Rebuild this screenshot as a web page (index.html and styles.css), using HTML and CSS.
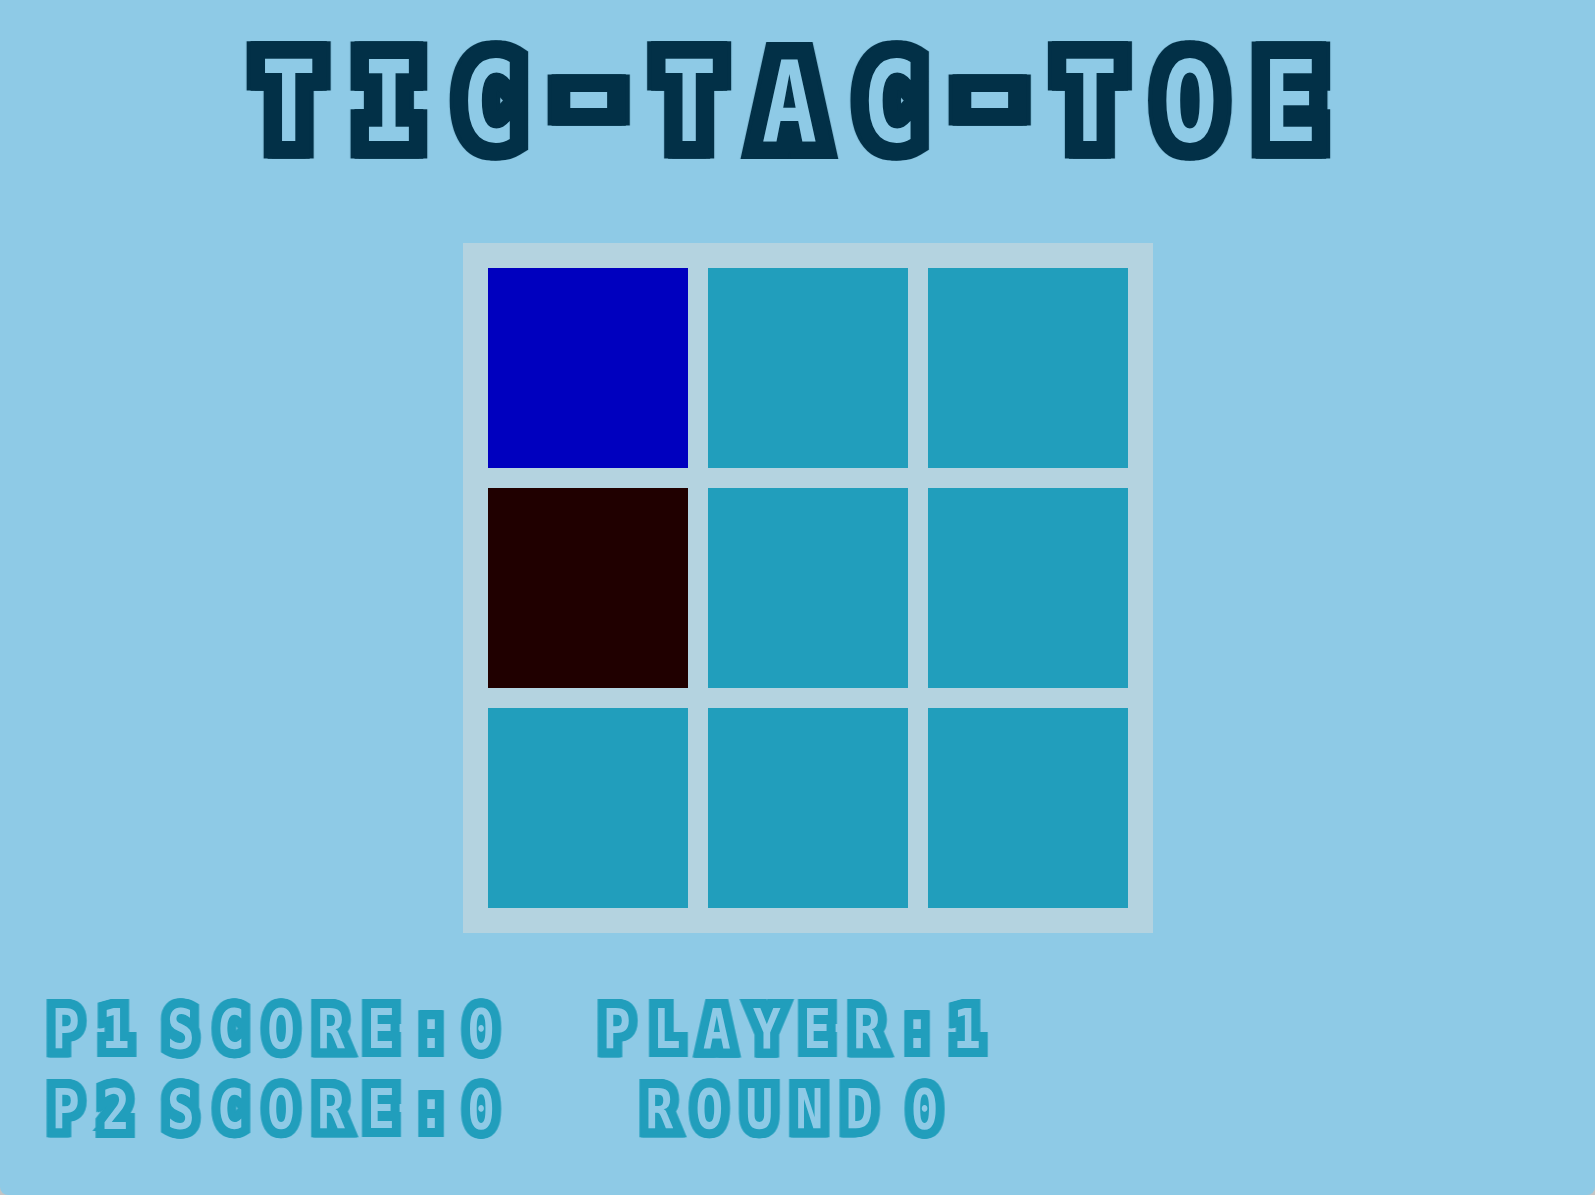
FILE: index.html
```html
<!DOCTYPE html>
<html lang="en">
<head>
<meta charset="utf-8">
<title>Tic-Tac-Toe</title>
<link rel="stylesheet" href="styles.css">
</head>
<body>
<main class="app">
  <h1 class="title">TI<span class="last">C</span><span class="dash">-</span>TA<span class="last">C</span><span class="dash">-</span>TOE</h1>
  <section class="board">
    <div class="cell cell-p1"></div>
    <div class="cell"></div>
    <div class="cell"></div>
    <div class="cell cell-p2"></div>
    <div class="cell"></div>
    <div class="cell"></div>
    <div class="cell"></div>
    <div class="cell"></div>
    <div class="cell"></div>
  </section>
  <footer class="footer">
    <div class="scores">
      <div class="line">P1 SCORE<span class="colon">:</span> 0</div>
      <div class="line">P2 SCORE<span class="colon">:</span> 0</div>
    </div>
    <div class="status">
      <div class="line">PLAYER<span class="colon">:</span> 1</div>
      <div class="line">ROUND 0</div>
    </div>
  </footer>
</main>
</body>
</html>
```
FILE: styles.css
```css
html { background: #c4c4c4; }
body { margin: 0; }
.app {
  width: 1595px;
  height: 1195px;
  box-sizing: border-box;
  overflow: hidden;
  background: #8ecae6;
  border-radius: 0 0 8px 8px;
  padding-top: 32px;
}
.title {
  margin: 0 0 0 261px;
  height: 211px;
  font: 700 112px/140px "DejaVu Sans Mono", monospace;
  letter-spacing: 54.7px;
  white-space: nowrap;
  color: #8ecae6;
  transform: scaleX(0.82);
  transform-origin: left top;
  -webkit-text-stroke: 35px #023047;
  paint-order: stroke fill;
  filter: drop-shadow(5px 0 0 #023047) drop-shadow(-5px 0 0 #023047) blur(0.5px);
}
.last { letter-spacing: 34.7px; }
.dash {
  display: inline-block;
  letter-spacing: 0;
  margin: 0 54.7px 0 20px;
  transform: translateY(-9px) scaleX(1.3);
  transform-origin: 50% 50%;
}
.board {
  margin-left: 463px;
  width: 690px;
  box-sizing: border-box;
  padding: 25px;
  display: grid;
  grid-template-columns: repeat(3, 200px);
  grid-auto-rows: 200px;
  gap: 20px;
  background: #b4d3e0;
}
.cell { background: #219ebc; }
.cell-p1 { background: #0000bf; }
.cell-p2 { background: #200000; }
.footer {
  margin-top: 56px;
  display: flex;
  font: 700 56px/80px "DejaVu Sans Mono", monospace;
  letter-spacing: 27.3px;
  word-spacing: -42.7px;
  white-space: nowrap;
  color: #8ecae6;
}
.scores { margin-left: 52px; width: 551px; transform: scaleX(0.82); transform-origin: left top; }
.status { width: 488px; text-align: center; transform: scaleX(0.82); transform-origin: left top; }
.line {
  -webkit-text-stroke: 18px #219ebc;
  paint-order: stroke fill;
  filter: drop-shadow(2px 0 0 #219ebc) drop-shadow(-2px 0 0 #219ebc) blur(0.5px);
}
.colon { letter-spacing: 9px; }
```
